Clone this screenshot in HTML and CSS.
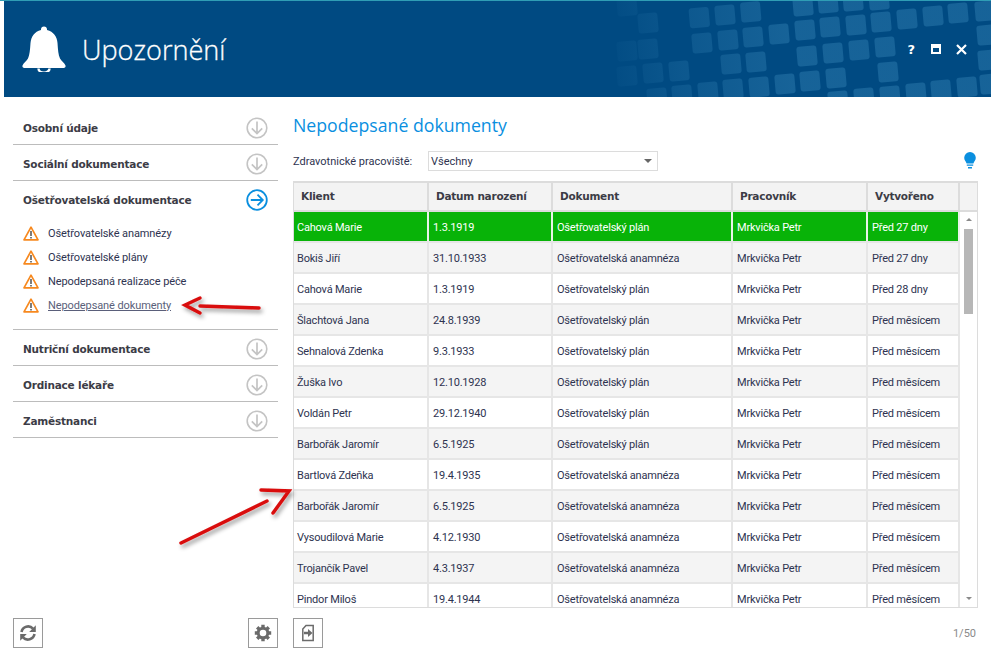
FILE: index.html
```html
<!DOCTYPE html>
<html lang="cs">
<head>
<meta charset="utf-8">
<title>Upozornění</title>
<link rel="stylesheet" href="styles.css">
</head>
<body>
<svg width="0" height="0" class="defs">
  <defs>
    <symbol id="down" viewBox="0 0 22 22"><circle cx="11" cy="11" r="9.8" fill="none" stroke="currentColor" stroke-width="1.6"/><path d="M11 4.5V16.5M5.8 11.3L11 16.5L16.2 11.3" fill="none" stroke="currentColor" stroke-width="1.7"/></symbol>
    <symbol id="warn" viewBox="0 0 16 15"><path d="M8 1.2L15 13.8H1Z" fill="#fff" stroke="#f7891f" stroke-width="1.7" stroke-linejoin="round"/><path d="M8 5V10M8 11V12.6" stroke="#444" stroke-width="1.4"/></symbol>
    <linearGradient id="fade" gradientUnits="userSpaceOnUse" x1="-30" y1="0" x2="150" y2="0">
      <stop offset="0" stop-color="#3f8fc0" stop-opacity=".03"/>
      <stop offset=".4" stop-color="#3f8fc0" stop-opacity=".2"/>
      <stop offset="1" stop-color="#3f8fc0" stop-opacity=".36"/>
    </linearGradient>
  </defs>
</svg>
<header class="header">
  <svg class="pattern" width="381" height="96" viewBox="-30 0 381 96">
    <g fill="url(#fade)">
      <rect x="-23" y="40" width="20" height="20" rx="3" transform="rotate(-5 -13 50)"/>
      <rect x="-23" y="65" width="20" height="20" rx="3" transform="rotate(-5 -13 75)"/>
      <rect x="-23" y="-5" width="20" height="20" rx="3" transform="rotate(-5 -13 5)"/>
      <rect x="49.3" y="6.7" width="20" height="20" rx="3" transform="rotate(-5 59 17)"/>
      <rect x="75" y="4" width="20" height="20" rx="3" transform="rotate(-5 85 14)"/>
      <rect x="100.7" y="1" width="20" height="20" rx="3" transform="rotate(-5 110 11)"/>
      <rect x="153" y="-5" width="20" height="20" rx="3" transform="rotate(-5 163 5)"/>
      <rect x="178" y="-8" width="20" height="20" rx="3" transform="rotate(-5 188 2)"/>
      <rect x="203" y="-10" width="20" height="20" rx="3" transform="rotate(-5 213 0)"/>
      <rect x="229" y="-11" width="20" height="20" rx="3" transform="rotate(-5 239 -1)"/>
      <rect x="-2" y="12" width="20" height="20" rx="3" transform="rotate(-5 8 22)"/>
      <rect x="155" y="19" width="20" height="20" rx="3" transform="rotate(-5 165 29)"/>
      <rect x="180" y="16" width="20" height="20" rx="3" transform="rotate(-5 190 26)"/>
      <rect x="206" y="14" width="20" height="20" rx="3" transform="rotate(-5 216 24)"/>
      <rect x="231" y="11" width="20" height="20" rx="3" transform="rotate(-5 241 21)"/>
      <rect x="257" y="8" width="20" height="20" rx="3" transform="rotate(-5 267 18)"/>
      <rect x="283" y="5" width="20" height="20" rx="3" transform="rotate(-5 293 15)"/>
      <rect x="308" y="2" width="20" height="20" rx="3" transform="rotate(-5 318 12)"/>
      <rect x="335" y="0" width="20" height="20" rx="3" transform="rotate(-5 345 10)"/>
      <rect x="52" y="32" width="20" height="20" rx="3" transform="rotate(-5 62 42)"/>
      <rect x="78" y="29" width="20" height="20" rx="3" transform="rotate(-5 88 39)"/>
      <rect x="103" y="26" width="20" height="20" rx="3" transform="rotate(-5 113 36)"/>
      <rect x="129" y="23" width="20" height="20" rx="3" transform="rotate(-5 139 33)"/>
      <rect x="-2" y="38" width="20" height="20" rx="3" transform="rotate(-5 8 48)"/>
      <rect x="337" y="24" width="20" height="20" rx="3" transform="rotate(-5 347 34)"/>
      <rect x="157" y="45" width="20" height="20" rx="3" transform="rotate(-5 167 55)"/>
      <rect x="183" y="42" width="20" height="20" rx="3" transform="rotate(-5 193 52)"/>
      <rect x="209" y="39" width="20" height="20" rx="3" transform="rotate(-5 219 49)"/>
      <rect x="235" y="36" width="20" height="20" rx="3" transform="rotate(-5 245 46)"/>
      <rect x="338" y="49" width="20" height="20" rx="3" transform="rotate(-5 348 59)"/>
      <rect x="81" y="53" width="20" height="20" rx="3" transform="rotate(-5 91 63)"/>
      <rect x="106" y="51" width="20" height="20" rx="3" transform="rotate(-5 116 61)"/>
      <rect x="3" y="62" width="20" height="20" rx="3" transform="rotate(-5 13 72)"/>
      <rect x="29" y="60" width="20" height="20" rx="3" transform="rotate(-5 39 70)"/>
      <rect x="238" y="61" width="20" height="20" rx="3" transform="rotate(-5 248 71)"/>
      <rect x="160" y="70" width="20" height="20" rx="3" transform="rotate(-5 170 80)"/>
      <rect x="186" y="67" width="20" height="20" rx="3" transform="rotate(-5 196 77)"/>
      <rect x="135" y="73" width="20" height="20" rx="3" transform="rotate(-5 145 83)"/>
      <rect x="109" y="76" width="20" height="20" rx="3" transform="rotate(-5 119 86)"/>
      <rect x="83" y="78" width="20" height="20" rx="3" transform="rotate(-5 93 88)"/>
      <rect x="58" y="81" width="20" height="20" rx="3" transform="rotate(-5 68 91)"/>
      <rect x="32" y="84" width="20" height="20" rx="3" transform="rotate(-5 42 94)"/>
      <rect x="7" y="87" width="20" height="20" rx="3" transform="rotate(-5 17 97)"/>
      <rect x="266" y="82" width="20" height="20" rx="3" transform="rotate(-5 276 92)"/>
      <rect x="291" y="79" width="20" height="20" rx="3" transform="rotate(-5 301 89)"/>
      <rect x="317" y="76" width="20" height="20" rx="3" transform="rotate(-5 327 86)"/>
      <rect x="340" y="73" width="20" height="20" rx="3" transform="rotate(-5 350 83)"/>
      <rect x="240" y="85" width="20" height="20" rx="3" transform="rotate(-5 250 95)"/>
      <rect x="214" y="87" width="20" height="20" rx="3" transform="rotate(-5 224 97)"/>
      <rect x="188" y="90" width="20" height="20" rx="3" transform="rotate(-5 198 100)"/>
    </g>
  </svg>
  <div class="brand">
    <svg class="bell" width="46" height="46" viewBox="0 0 46 46"><path fill="#fff" d="M23 0.5c-1.8 0-3 1.100-3 2.800v.6C13.500 5.500 10 10.500 9.500 17c-.5 7-.8 12-2.500 15.500C5.800 35 2.300 37 1.500 39.500c-.4 1.400.4 2.500 2 2.500h39c1.600 0 2.400-1.100 2-2.500C43.700 37 40.200 35 39 32.500 37.300 29 37 24 36.500 17 36 10.500 32.500 5.500 26 3.900v-.6c0-1.700-1.200-2.800-3-2.800z"/><path fill="none" stroke="#fff" stroke-width="2.400" d="M17.500 42.500a5.500 4.200 0 0 0 11 0"/></svg>
    <h1 class="app-title">Upozornění</h1>
  </div>
  <div class="win-controls">
    <span class="help">?</span>
    <svg width="10" height="10" viewBox="0 0 10 10"><path fill="#fff" d="M0 0h10v10H0zM2 4v4h6V4z" fill-rule="evenodd"/></svg>
    <svg width="11" height="11" viewBox="0 0 11 11"><path stroke="#fff" stroke-width="2.200" d="M1 1l9 9M10 1l-9 9"/></svg>
  </div>
</header>

<div class="main">
  <aside class="sidebar">
    <nav class="menu">
      <div class="sec"><span>Osobní údaje</span><svg class="arrow" width="22" height="22"><use href="#down"/></svg></div>
      <div class="sec"><span>Sociální dokumentace</span><svg class="arrow" width="22" height="22"><use href="#down"/></svg></div>
      <div class="sec open">
        <div class="sec-head"><span>Ošetřovatelská dokumentace</span>
          <svg class="arrow active" width="22" height="22" viewBox="0 0 22 22"><circle cx="11" cy="11" r="9.800" fill="none" stroke="currentColor" stroke-width="1.800"/><path d="M4.800 11H16.800M11.500 5.700L16.800 11L11.500 16.300" fill="none" stroke="currentColor" stroke-width="1.800"/></svg>
        </div>
        <ul class="sub">
          <li><svg width="16" height="15"><use href="#warn"/></svg><span>Ošetřovatelské anamnézy</span></li>
          <li><svg width="16" height="15"><use href="#warn"/></svg><span>Ošetřovatelské plány</span></li>
          <li><svg width="16" height="15"><use href="#warn"/></svg><span>Nepodepsaná realizace péče</span></li>
          <li><svg width="16" height="15"><use href="#warn"/></svg><span class="current">Nepodepsané dokumenty</span></li>
        </ul>
      </div>
      <div class="sec"><span>Nutriční dokumentace</span><svg class="arrow" width="22" height="22"><use href="#down"/></svg></div>
      <div class="sec"><span>Ordinace lékaře</span><svg class="arrow" width="22" height="22"><use href="#down"/></svg></div>
      <div class="sec"><span>Zaměstnanci</span><svg class="arrow" width="22" height="22"><use href="#down"/></svg></div>
    </nav>
    <div class="side-foot">
      <button class="icon-btn" type="button" aria-label="Obnovit"><svg width="18" height="18" viewBox="0 0 18 18"><path fill="none" stroke="#6b6b6b" stroke-width="2.600" d="M2.500 8A6.700 6.700 0 0 1 14 4.600M15.500 10A6.700 6.700 0 0 1 4 13.400"/><path fill="#6b6b6b" d="M16.800 1.200V8h-6.600zM1.200 16.800V10h6.600z"/></svg></button>
      <button class="icon-btn" type="button" aria-label="Nastavení"><svg width="18" height="18" viewBox="0 0 18 18"><circle cx="9" cy="9" r="4.800" fill="none" stroke="#6b6b6b" stroke-width="3"/><path stroke="#6b6b6b" stroke-width="3.400" d="M9 .8v3.400M9 13.800v3.400M.8 9h3.400M13.800 9h3.400M3.200 3.200l2.400 2.400M12.400 12.400l2.400 2.400M3.200 14.800l2.400-2.400M12.400 5.600l2.400-2.400"/></svg></button>
    </div>
  </aside>

  <section class="content">
    <h2 class="page-title">Nepodepsané dokumenty</h2>
    <div class="filter">
      <label class="filter-label">Zdravotnické pracoviště:</label>
      <div class="select"><span>Všechny</span><i class="caret"></i></div>
      <svg class="bulb" width="12" height="17" viewBox="0 0 12 17"><path fill="#0a8fdf" d="M6 0a5.800 5.800 0 0 0-5.800 5.800c0 2.600 1.800 3.700 2.400 5.700h6.800c.6-2 2.400-3.100 2.400-5.700A5.800 5.800 0 0 0 6 0z"/><path fill="#0a8fdf" d="M2.800 12.500h6.400v1.300H2.800zM4 15h4v1.500H4z"/></svg>
    </div>
    <div class="grid">
      <div class="grid-head">
        <div class="col-a">Klient</div><div class="col-b">Datum narození</div><div class="col-c">Dokument</div><div class="col-d">Pracovník</div><div class="col-e">Vytvořeno</div><div class="col-f"></div>
      </div>
      <div class="grid-body">
        <div class="rows">
          <div class="row selected"><div class="col-a">Cahová Marie</div><div class="col-b">1.3.1919</div><div class="col-c">Ošetřovatelský plán</div><div class="col-d">Mrkvička Petr</div><div class="col-e">Před 27 dny</div></div>
          <div class="row"><div class="col-a">Bokiš Jiří</div><div class="col-b">31.10.1933</div><div class="col-c">Ošetřovatelská anamnéza</div><div class="col-d">Mrkvička Petr</div><div class="col-e">Před 27 dny</div></div>
          <div class="row"><div class="col-a">Cahová Marie</div><div class="col-b">1.3.1919</div><div class="col-c">Ošetřovatelský plán</div><div class="col-d">Mrkvička Petr</div><div class="col-e">Před 28 dny</div></div>
          <div class="row"><div class="col-a">Šlachtová Jana</div><div class="col-b">24.8.1939</div><div class="col-c">Ošetřovatelský plán</div><div class="col-d">Mrkvička Petr</div><div class="col-e">Před měsícem</div></div>
          <div class="row"><div class="col-a">Sehnalová Zdenka</div><div class="col-b">9.3.1933</div><div class="col-c">Ošetřovatelský plán</div><div class="col-d">Mrkvička Petr</div><div class="col-e">Před měsícem</div></div>
          <div class="row"><div class="col-a">Žuška Ivo</div><div class="col-b">12.10.1928</div><div class="col-c">Ošetřovatelský plán</div><div class="col-d">Mrkvička Petr</div><div class="col-e">Před měsícem</div></div>
          <div class="row"><div class="col-a">Voldán Petr</div><div class="col-b">29.12.1940</div><div class="col-c">Ošetřovatelský plán</div><div class="col-d">Mrkvička Petr</div><div class="col-e">Před měsícem</div></div>
          <div class="row"><div class="col-a">Barbořák Jaromír</div><div class="col-b">6.5.1925</div><div class="col-c">Ošetřovatelský plán</div><div class="col-d">Mrkvička Petr</div><div class="col-e">Před měsícem</div></div>
          <div class="row"><div class="col-a">Bartlová Zdeňka</div><div class="col-b">19.4.1935</div><div class="col-c">Ošetřovatelská anamnéza</div><div class="col-d">Mrkvička Petr</div><div class="col-e">Před měsícem</div></div>
          <div class="row"><div class="col-a">Barbořák Jaromír</div><div class="col-b">6.5.1925</div><div class="col-c">Ošetřovatelská anamnéza</div><div class="col-d">Mrkvička Petr</div><div class="col-e">Před měsícem</div></div>
          <div class="row"><div class="col-a">Vysoudilová Marie</div><div class="col-b">4.12.1930</div><div class="col-c">Ošetřovatelská anamnéza</div><div class="col-d">Mrkvička Petr</div><div class="col-e">Před měsícem</div></div>
          <div class="row"><div class="col-a">Trojančík Pavel</div><div class="col-b">4.3.1937</div><div class="col-c">Ošetřovatelská anamnéza</div><div class="col-d">Mrkvička Petr</div><div class="col-e">Před měsícem</div></div>
          <div class="row"><div class="col-a">Pindor Miloš</div><div class="col-b">19.4.1944</div><div class="col-c">Ošetřovatelská anamnéza</div><div class="col-d">Mrkvička Petr</div><div class="col-e">Před měsícem</div></div>
        </div>
        <div class="scrollbar"><i class="up"></i><div class="track"><div class="thumb"></div></div><i class="down"></i></div>
      </div>
    </div>
    <div class="content-foot">
      <button class="icon-btn" type="button" aria-label="Export"><svg width="18" height="18" viewBox="0 0 18 18"><path fill="none" stroke="#6b6b6b" stroke-width="1.500" d="M7 1.500h7.200v15H3.800V5z"/><path fill="#6b6b6b" d="M5 7.800h4V5l4.500 4-4.500 4v-2.800H5z"/></svg></button>
      <span class="pager">1/50</span>
    </div>
  </section>
</div>

<svg class="annot" width="991" height="658" viewBox="0 0 991 658">
  <defs><filter id="sh" x="-20%" y="-50%" width="140%" height="200%"><feDropShadow dx="2" dy="3" stdDeviation="2" flood-color="#000" flood-opacity=".4"/></filter></defs>
  <g fill="none" stroke="#d90d0d" stroke-width="3.500" stroke-linecap="round" filter="url(#sh)">
    <path d="M259 308L200 306"/><path d="M200 298L185 305L200 313"/>
    <path d="M181 543L267 501"/><path d="M261 490L289 491L273 513"/>
  </g>
</svg>
</body>
</html>
```

FILE: styles.css
```css
* { box-sizing: border-box; }
html, body { margin: 0; padding: 0; }
body {
  width: 991px;
  height: 658px;
  overflow: hidden;
  position: relative;
  background: #fff;
  font-family: Roboto, "Liberation Sans", Arial, sans-serif;
  font-size: 11px;
  color: #2e3350;
  display: flex;
  flex-direction: column;
}
body::before {
  content: "";
  flex: none;
  height: 1px;
  background: #2f9db5;
}
.defs { position: absolute; }
.header {
  position: relative;
  height: 96px;
  margin-left: 4px;
  background: #004a82;
  display: flex;
  align-items: center;
  justify-content: space-between;
  flex: none;
}
.pattern { position: absolute; right: 0; top: 0; }
.brand { display: flex; align-items: center; padding-left: 17px; position: relative; }
.bell { margin-right: 15px; }
.app-title {
  margin: 0;
  font-family: "Open Sans", sans-serif;
  font-weight: 300;
  font-size: 27.1px;
  color: #fff;
  -webkit-text-stroke: .3px #fff;
}
.win-controls {
  position: relative;
  display: flex;
  align-items: center;
  gap: 15px;
  padding-right: 24px;
}
.help { color: #fff; font-weight: 700; font-size: 13px; font-family: "DejaVu Sans", sans-serif; line-height: 13px; margin-right: 1px; }

.main { flex: 1; display: flex; min-height: 0; padding-left: 13px; }
.sidebar {
  width: 265px;
  flex: none;
  display: flex;
  flex-direction: column;
  justify-content: space-between;
  padding: 12px 0 10px;
}
.menu { display: flex; flex-direction: column; }
.sec {
  display: flex;
  align-items: center;
  justify-content: space-between;
  min-height: 36px;
  padding: 2px 10px 0 10px;
  border-bottom: 1px solid #bcbcbc;
  font-weight: 700;
  font-family: "DejaVu Sans", sans-serif;
  font-size: 10.5px;
  letter-spacing: -.2px;
  color: #3c3c46;
}
.sec.open { display: block; padding: 0 10px; }
.sec-head { display: flex; align-items: center; justify-content: space-between; height: 36px; padding-top: 2px; }
.arrow { color: #c4c4c4; flex: none; }
.arrow.active { color: #0a8fdf; }
.sub {
  list-style: none;
  margin: 0;
  padding: 4px 0 12px;
  font-family: Roboto, "Liberation Sans", Arial, sans-serif;
  font-weight: 400;
  font-size: 11px;
  letter-spacing: -.1px;
  color: #2e3350;
}
.sub li { display: flex; align-items: center; gap: 9px; height: 24px; }
.current { text-decoration: underline; color: #5a5f7a; }
.side-foot { display: flex; justify-content: space-between; }
.icon-btn {
  width: 30px;
  height: 30px;
  padding: 0;
  background: #fff;
  border: 1px solid #9a9a9a;
  display: flex;
  align-items: center;
  justify-content: center;
}

.content {
  width: 685px;
  margin-left: 15px;
  flex: none;
  display: flex;
  flex-direction: column;
  padding-top: 15px;
}
.page-title {
  margin: 0;
  font-family: "Open Sans", sans-serif;
  font-weight: 400;
  font-size: 17.700px;
  line-height: 27px;
  color: #0a8fdf;
}
.filter { display: flex; align-items: center; height: 20px; margin-top: 12px; }
.filter-label { width: 135px; flex: none; }
.select {
  width: 230px;
  height: 20px;
  border: 1px solid #dcdcdc;
  padding: 0 5px 0 2px;
  display: flex;
  align-items: center;
  justify-content: space-between;
}
.caret { width: 0; height: 0; border: 4px solid transparent; border-top: 4px solid #666; border-bottom: 0; }
.bulb { margin-left: auto; margin-right: 2px; margin-top: -2px; }
.grid {
  margin-top: 10px;
  height: 427px;
  border: 1px solid #dcdcdc;
  border-top-width: 2px;
  display: flex;
  flex-direction: column;
  overflow: hidden;
}
.grid-head {
  display: flex;
  height: 29px;
  flex: none;
  background: #f3f3f3;
  border-bottom: 2px solid #dcdcdc;
  font-family: "DejaVu Sans", sans-serif;
  font-weight: 700;
  font-size: 10.5px;
  letter-spacing: -.25px;
  color: #3c3c46;
}
.grid-head > div { display: flex; align-items: center; padding: 0 0 1px 7px; border-right: 2px solid #dcdcdc; }
.col-a { width: 135px; }
.col-b { width: 124px; }
.col-c { width: 180px; }
.col-d { width: 135px; }
.col-e { width: 92px; }
.col-f { width: 17px; border-right: 0 !important; }
.grid-body { flex: 1; display: flex; min-height: 0; }
.rows { width: 666px; flex: none; display: flex; flex-direction: column; letter-spacing: -.2px; }
.row { display: flex; height: 31px; flex: none; border-bottom: 2px solid #e6e6e6; }
.row > div { display: flex; align-items: center; padding: 2px 0 0 3px; border-right: 2px solid #e6e6e6; }
.row > .col-b, .row > .col-c, .row > .col-d, .row > .col-e { padding-left: 4px; }
.row:nth-child(even) { background: #f4f4f4; }
.row.selected { background: #08b308; color: #fff; }
.row.selected > div { border-right-color: #e8f4e8; }
.scrollbar { flex: 1; display: flex; flex-direction: column; align-items: center; padding: 6px 0 7px; }
.track { flex: 1; width: 9px; padding-top: 8px; }
.thumb { height: 85px; background: #b7b7b7; }
.up, .down { width: 0; height: 0; border: 3px solid transparent; }
.up { border-bottom: 3px solid #8a8a8a; border-top: 0; }
.down { border-top: 3px solid #8a8a8a; border-bottom: 0; }
.content-foot { display: flex; align-items: center; justify-content: space-between; margin-top: 10px; height: 30px; }
.pager { color: #8a8a8a; padding-right: 2px; }
.annot { position: absolute; left: 0; top: 0; pointer-events: none; }
```
